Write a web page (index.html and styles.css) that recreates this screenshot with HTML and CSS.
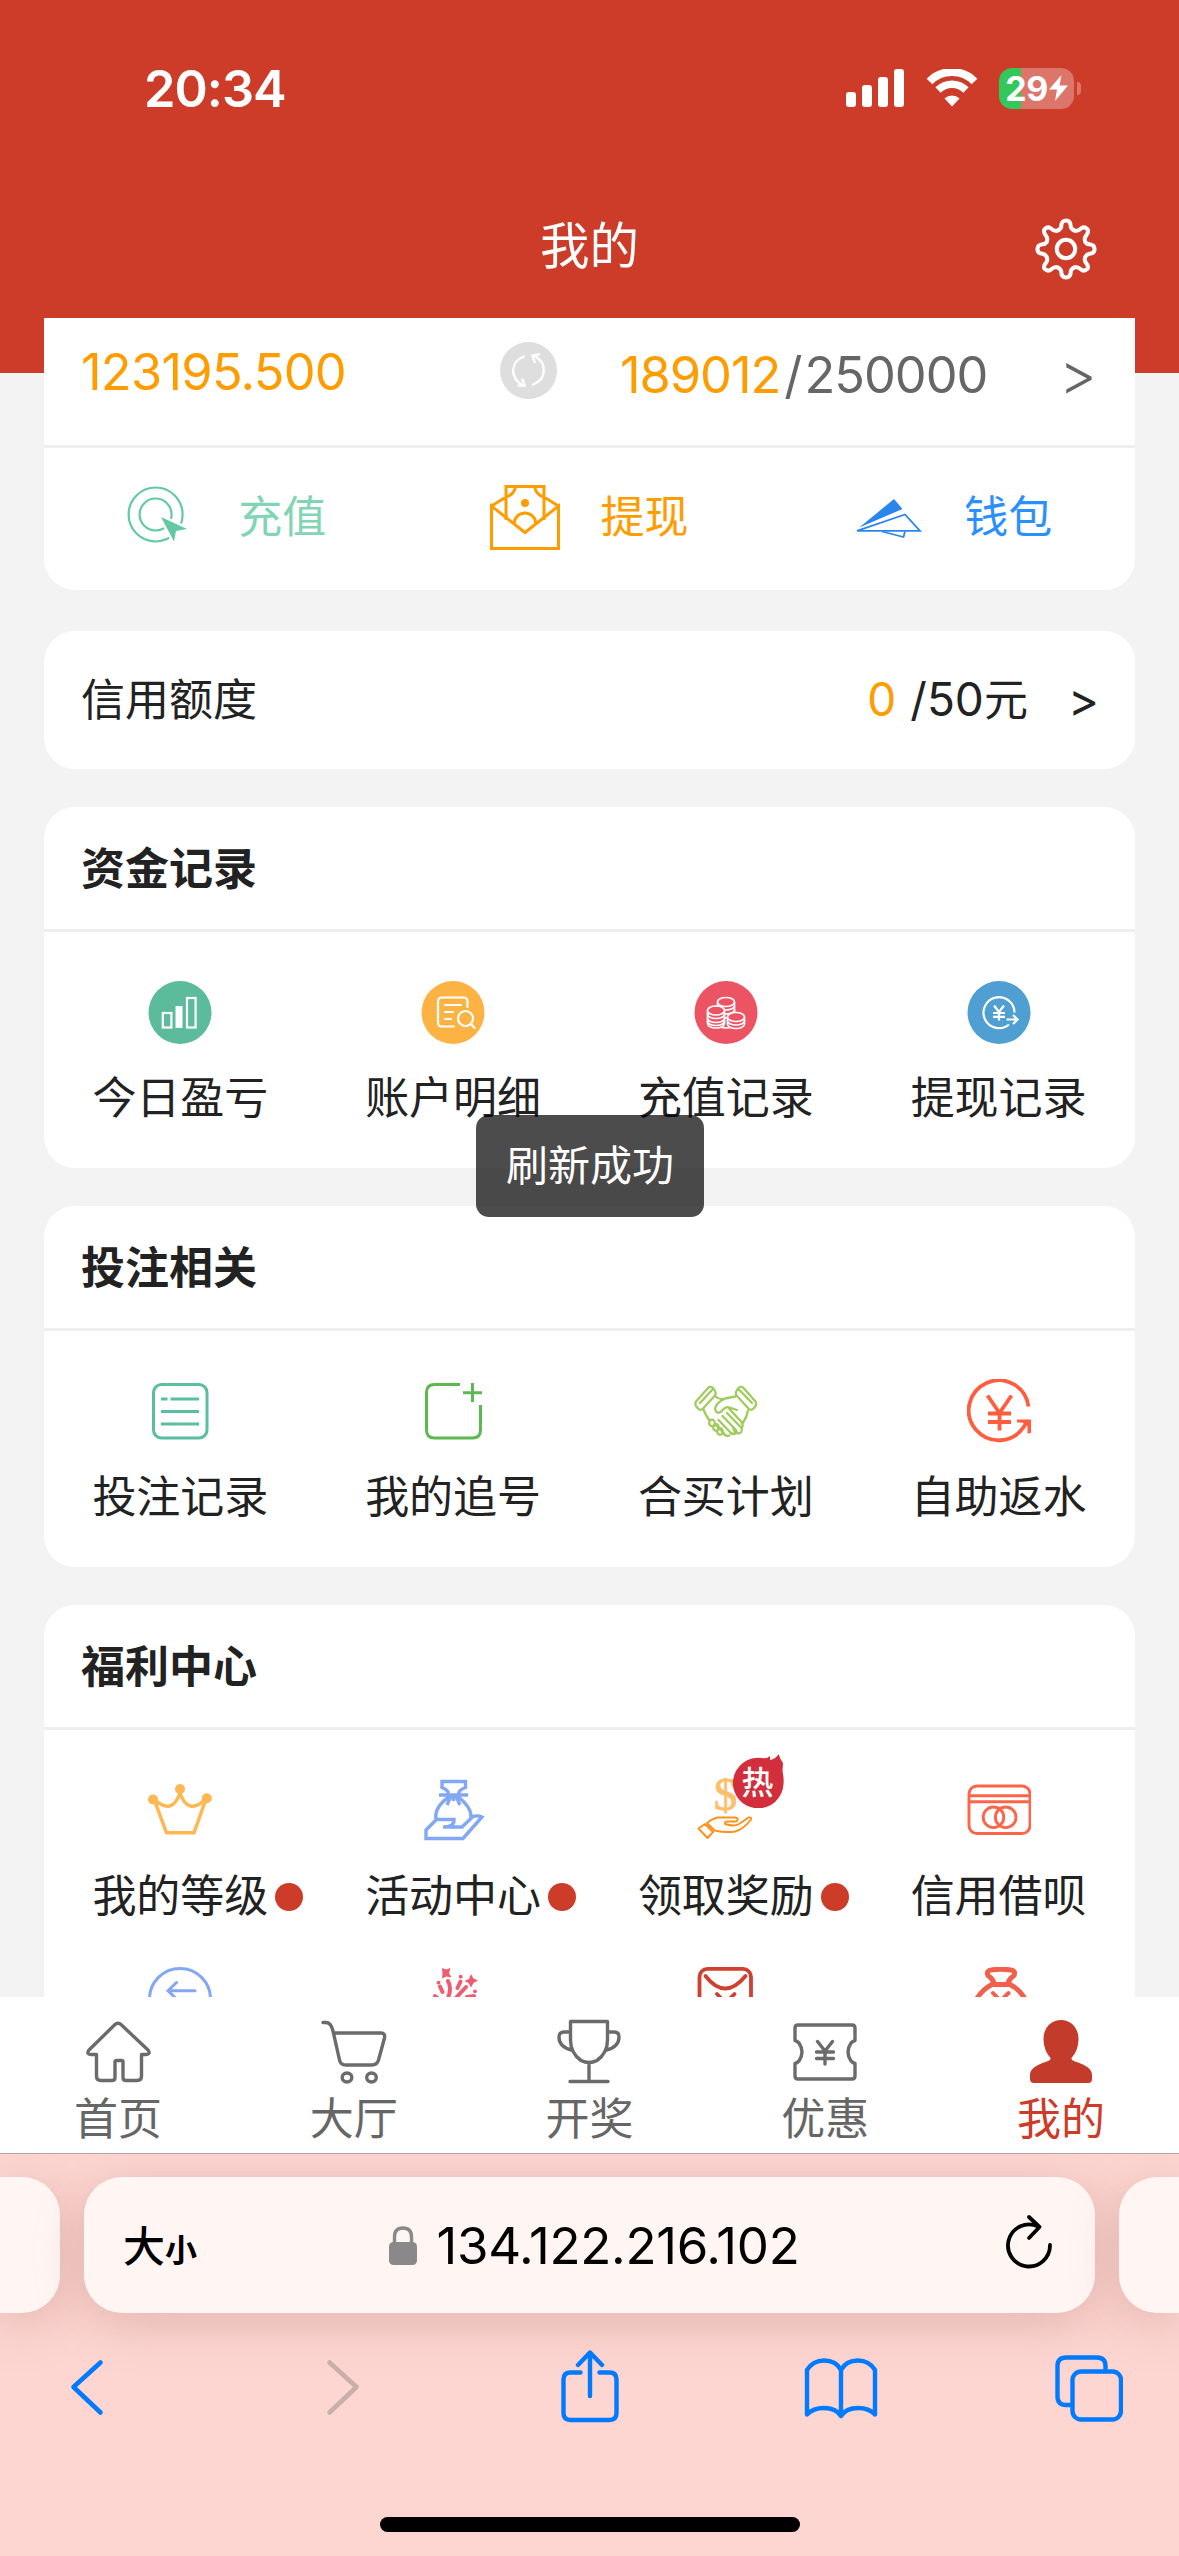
FILE: index.html
```html
<!DOCTYPE html>
<html lang="zh-CN">
<head>
<meta charset="utf-8">
<title>我的</title>
<link rel="stylesheet" href="styles.css">
</head>
<body>
<div class="phone">
  <header class="top">
    <div class="status">
      <span class="time">20:34</span>
      <div class="status-icons">
        <svg class="signal" width="58" height="38" viewBox="0 0 58 38" fill="#fff"><rect x="0" y="23" width="10" height="15" rx="3"/><rect x="16" y="16" width="10" height="22" rx="3"/><rect x="32" y="8" width="10" height="30" rx="3"/><rect x="48" y="0" width="10" height="38" rx="3"/></svg>
        <svg class="wifi" width="52" height="38" viewBox="0 0 52 38" fill="none" stroke="#fff"><path d="M3.500 12.500A31.500 31.500 0 0 1 48.500 12.500" stroke-width="8"/><path d="M12 21A19.800 19.800 0 0 1 40 21" stroke-width="7.500"/><path d="M26 37.500L18.500 29.600A10.800 10.800 0 0 1 33.500 29.600Z" fill="#fff" stroke="none"/></svg>
        <div class="battery"><span class="battery-num">29</span><svg width="19" height="26" viewBox="0 0 19 26"><path d="M12.500 0L0 14.500H8L6 26L19 10.500H10.500Z" fill="#fff"/></svg></div>
        <span class="battery-nub"></span>
      </div>
    </div>
    <div class="nav">
      <h1 class="nav-title">我的</h1>
      <svg class="gear" width="62" height="62" viewBox="0 0 64 64" fill="none" stroke="#fff" stroke-width="4.200" stroke-linejoin="round"><path d="M27 9.500Q27 2.500 32 2.500Q37 2.500 37 9.500Q38 12.500 42 13.500Q45 13.500 48 10.500Q51 8.500 54 11.500Q56 14 52.500 18.500Q50.500 21 52 25Q53.500 27 56 27Q61.500 27.500 61.500 32Q61.500 36.500 56 37Q53.500 37.500 52 40Q50.500 43.500 52.500 46Q56 50 54 52.500Q51 55.500 48 53.500Q45 50.500 42 50.500Q38 51.500 37 54.500Q37 61.500 32 61.500Q27 61.500 27 54.500Q26 51.500 22 50.500Q19 50.500 16 53.500Q13 55.500 10 52.500Q8 50 11.500 46Q13.500 43.500 12 40Q10.500 37.500 8 37Q2.500 36.500 2.500 32Q2.500 27.500 8 27Q10.500 27 12 25Q13.500 21 11.500 18.500Q8 14 10 11.500Q13 8.500 16 10.500Q19 13.500 22 13.500Q26 12.500 27 9.500Z"/><circle cx="32" cy="32" r="9.500"/></svg>
    </div>
  </header>

  <main class="page">
    <section class="card wallet">
      <div class="balances">
        <span class="balance">123195.500</span>
        <svg class="refresh" width="57" height="57" viewBox="0 0 57 57"><circle cx="28.500" cy="28.500" r="28.500" fill="#dedede"/><g fill="none" stroke="#fff" stroke-width="2.400" stroke-linecap="round"><path d="M24 14.500C10 20 9.500 36 23 43.500"/><path d="M18.500 43.500H24.500L22.500 37.500"/><path d="M33 42.500C47 37 47.500 21 34 13.500"/><path d="M39 12.500L32.500 13.500L34.500 20"/></g></svg>
        <span class="quota"><em>189012</em><span class="slash">/</span>250000</span>
        <span class="arrow">&gt;</span>
      </div>
      <div class="actions">
        <a class="action deposit"><svg width="70" height="65" viewBox="0 0 70 65" fill="none" stroke="#62c9a3" stroke-width="2.200"><circle cx="30.600" cy="29.500" r="27"/><circle cx="30.600" cy="29.500" r="16"/><path d="M36 32L62 44L51 46L49 56.500Z" fill="#62c9a3" stroke="#fff" stroke-width="5" paint-order="stroke"/></svg><span>充值</span></a>
        <a class="action withdraw"><svg width="70" height="65" viewBox="0 0 70 65" fill="none" stroke="#ff9c00" stroke-width="3"><path d="M1.500 21V63.500H68.500V21L35 47.500Z"/><path d="M16 35V1.500H54V35M1.500 21L16 12M68.500 21L54 12M25.500 1.500Q24 10 16 12M44.500 1.500Q46 10 54 12M24 39A11 11 0 0 1 46 39"/><circle cx="35" cy="18" r="4" fill="#ff9c00" stroke="none"/></svg><span>提现</span></a>
        <a class="action purse"><svg width="70" height="46" viewBox="0 -4 70 46" fill="none" stroke="#2a86ee" stroke-width="1.800"><path d="M5.300 28.500L40 0L48.500 10Z" fill="#2a86ee" stroke="none"/><path d="M3 31.800L51 15.500L66 31.800Z"/><path d="M28 32.500L49.500 38L51 32.500"/></svg><span>钱包</span></a>
      </div>
    </section>

    <section class="card credit">
      <span>信用额度</span>
      <span class="credit-num"><em>0</em>/50<span class="unit">元</span></span>
      <span class="arrow small">&gt;</span>
    </section>

    <section class="card">
      <h2 class="card-title">资金记录</h2>
      <div class="grid">
        <a class="item"><svg class="icon" viewBox="0 0 64 64"><circle cx="32" cy="32.500" r="31.500" fill="#5bbb9b"/><g fill="none" stroke="#fff" stroke-width="2.200"><rect x="14.800" y="33" width="8.600" height="14.500"/><rect x="27.500" y="26" width="7" height="22" fill="#fff" stroke="none"/><rect x="39" y="18" width="8.600" height="29.500"/></g></svg>今日盈亏</a>
        <a class="item"><svg class="icon" viewBox="0 0 64 64"><circle cx="32" cy="32.500" r="31.500" fill="#fdb343"/><g fill="none" stroke="#fff" stroke-width="2.200" stroke-linecap="round"><path d="M33 46.500H21Q17 46.500 17 42.500V21.500Q17 17.500 21 17.500H42.500Q46.500 17.500 46.500 21.500V27M24 25H40M24 32H32M24 39H30"/><circle cx="44.500" cy="38.500" r="7.500"/><path d="M50 44L53.500 48"/></g></svg>账户明细</a>
        <a class="item"><svg class="icon" viewBox="0 0 64 64"><circle cx="32" cy="32.500" r="31.500" fill="#ec5463"/><g fill="#ec5463" stroke="#fff" stroke-width="1.700"><path d="M23.500 22V44A8.500 4 0 0 0 40.500 44V22"/><ellipse cx="32" cy="22" rx="8.500" ry="4.500"/><path d="M23.500 26A8.500 4 0 0 0 40.500 26M23.500 30A8.500 4 0 0 0 40.500 30M23.500 34A8.500 4 0 0 0 40.500 34" fill="none"/><path d="M13.500 30.500V43.500A8.500 4.500 0 0 0 30.500 43.500V30.500"/><ellipse cx="22" cy="30.500" rx="8.500" ry="4.500"/><path d="M13.500 34A8.500 4.500 0 0 0 30.500 34M13.500 38A8.500 4.500 0 0 0 30.500 38M13.500 41A8.500 4.500 0 0 0 30.500 41" fill="none"/><path d="M33.500 37V44A8.500 4.500 0 0 0 50.500 44V37"/><ellipse cx="42" cy="37" rx="8.500" ry="4.500"/><path d="M33.500 40.500A8.500 4.500 0 0 0 50.500 40.500" fill="none"/></g></svg>充值记录</a>
        <a class="item"><svg class="icon" viewBox="0 0 64 64"><circle cx="32" cy="32.500" r="31.500" fill="#509fd2"/><g fill="none" stroke="#fff" stroke-width="2.200"><path d="M47.500 32.500A15.500 15.500 0 1 0 42 44.500"/><path d="M27 25.500L32 32L37 25.500M32 32V40.500M26 33H38M26 36.800H38M39.500 39.500H50M46 35L50.500 39.500L46 44"/></g></svg>提现记录</a>
      </div>
    </section>

    <section class="card">
      <h2 class="card-title">投注相关</h2>
      <div class="grid">
        <a class="item"><svg class="icon" viewBox="0 0 64 64" fill="none" stroke="#5bbf9f" stroke-width="3"><rect x="5.500" y="5.500" width="53.500" height="53.500" rx="8"/><path d="M13 20H19.500M22.500 20H51M13 32.500H51M13 45H51"/></svg>投注记录</a>
        <a class="item"><svg class="icon" viewBox="0 0 64 64" fill="none" stroke="#5cb851" stroke-width="3"><path d="M39 5.500H13.500Q5.500 5.500 5.500 13.500V51Q5.500 59 13.500 59H51.500Q59.500 59 59.500 51V26M51.500 4V23M42 13.700H61"/></svg>我的追号</a>
        <a class="item"><svg class="icon" viewBox="0 0 64 64" fill="none" stroke="#a0cb5d" stroke-width="2.300" stroke-linecap="round" stroke-linejoin="round"><path d="M14 9Q17 6.500 19.500 9.500L21 12Q22.500 14.500 20.500 17L9 29.500Q6.500 32 4 29.500L2 27Q0.500 24.500 2.500 22ZM18.500 10.500L6 24M49.500 9Q46.500 6.500 44 9.500L42.500 12Q41 14.500 43 17L54.500 29.500Q57 32 59.500 29.500L61.500 27Q63 24.500 61 22ZM45 10.500L58 24"/><path d="M21.500 17.500Q26 21.500 31 19.500Q36 18.500 41.500 17.500M9.500 30.500Q11.500 36 15.500 41.500M54 31.500Q53 38 48.500 44.500M31 19.500Q22 24 21 29.500Q22 36 27.500 32.500Q31.500 27 35.500 28.500L43 31M35 29.500L47.500 43Q49.500 46 48 49M33 34L47.500 49Q49 54 44 54.500M28.500 37L41.500 50.500Q43 54 44 54.500M24.500 41L36 53Q38 56 41.500 54.500L39 48.500M21.500 46L29 53Q31 58 35.500 56.500"/><ellipse cx="18" cy="44" rx="2.800" ry="3.300"/><ellipse cx="22" cy="48.500" rx="2.800" ry="3.300"/><ellipse cx="26" cy="52.500" rx="2.800" ry="3.300"/></svg>合买计划</a>
        <a class="item"><svg class="icon" viewBox="0 0 64 64" fill="none" stroke="#ff5d3e" stroke-width="3.800"><path d="M61.500 27.500A30 30 0 1 0 57 47.500L61 42"/><path d="M50 40.500H64V54L60.500 54.500V47L55 43.500H50Z" fill="#ff5d3e" stroke="none"/><path d="M20.500 16.500L32.500 34L44.500 16.500M32.500 34V51.500M21 34.500H44M21 43H44"/></svg>自助返水</a>
      </div>
    </section>

    <section class="card welfare">
      <h2 class="card-title">福利中心</h2>
      <div class="grid">
        <a class="item"><svg class="icon" viewBox="0 0 64 64" fill="none" stroke="#ffb752" stroke-width="3.500"><path d="M6 21L18.500 54.800H46L58 21Q40 38 32 15Q24 38 6 21Z"/><g fill="#ffb752" stroke="none"><circle cx="5" cy="21.500" r="5"/><circle cx="32" cy="11" r="5"/><circle cx="58.800" cy="20.300" r="5"/></g></svg><span class="label">我的等级<i class="dot"></i></span></a>
        <a class="item"><svg class="icon" viewBox="0 0 64 64" fill="none" stroke="#82a7f5" stroke-width="3.400"><path d="M27.500 17Q28 12 21 9.500V3.500H44.500V9.500Q37 12 37.500 17M18 17H47M29 18Q13 29 15 41M36 18Q51 29 50 40M30 18L26 27M35 18L39 27M32.500 17V23"/><path d="M5 60.500V52L15.500 41.500H33Q33.500 49 22 49H41L52 38.500Q57 37 61 39L42 60.500Z"/></svg><span class="label">活动中心<i class="dot"></i></span></a>
        <a class="item"><svg class="icon" viewBox="0 0 64 64" fill="none" stroke="#ff9119" stroke-width="1.900" stroke-linejoin="round"><text class="dollar" x="31.500" y="32" text-anchor="middle">$</text><path d="M11 46L4.500 50.500L13.500 60L19 54ZM13 45L20.500 52.500Q32 55 41 53.500Q50 51 57 41.500Q58 39 54.500 39.500L45 46Q40 49 31 46Q30 43.500 34 43.500H42Q46 40.500 41 39.500H23Q18 41 13 45Z"/></svg><span class="hot"><svg width="51" height="54" viewBox="0 0 51 54"><path d="M45.500 0Q47.500 6 50 9L49.500 17Q51 24 50.500 30A25.300 25.300 0 1 1 29 4Q34 5 37 2V6Q43 5 45.500 0Z" fill="#d22e3b"/></svg><b>热</b></span><span class="label">领取奖励<i class="dot"></i></span></a>
        <a class="item"><svg class="icon" viewBox="0 0 64 64" fill="none" stroke="#ff6449" stroke-width="2.900"><rect x="2" y="8" width="61" height="47.500" rx="8"/><path d="M2 17.700H63M2 23.800H63"/><circle cx="26.500" cy="39.300" r="10.300"/><circle cx="38.700" cy="39.300" r="10.300"/></svg>信用借呗</a>
        <a class="item"><svg class="icon" viewBox="0 0 64 64" fill="none" stroke="#82a7f5" stroke-width="3"><circle cx="32" cy="32" r="30.500"/><path d="M47 23.700H20.500M28.500 15.500L20 23.700L28.500 32" stroke-linecap="round"/></svg></a>
        <a class="item"><svg class="icon" viewBox="0 0 64 64" fill="#ee5c72" stroke="#ee5c72" stroke-width="4" stroke-linecap="round"><path d="M21 1L25 2.500L29.500 1L28 6L30.500 10.500L25.500 9.500L21 11.500L21.500 6.500ZM50 7L52.500 11.500L57 13.500L52.500 16L50 20.500L47.500 16L43.500 14L48 12Z" stroke="none"/><path d="M27 14Q31 21 27 31M45 20L33 33M39.500 14.500L36.500 21M19 19.500L21.500 25M53 29L46 30M14 29L20 34" fill="none"/><g stroke="none"><circle cx="17.500" cy="15.700" r="1.900"/><circle cx="39.700" cy="9.700" r="1.900"/><circle cx="54" cy="24.300" r="1.900"/></g></svg></a>
        <a class="item"><svg class="icon" viewBox="0 0 64 64" fill="none" stroke="#d04030" stroke-width="3.800" stroke-linecap="round"><rect x="5.500" y="1.900" width="51.500" height="60" rx="8"/><path d="M11.500 9Q31 34 51.500 9M23 27L31.500 36L40.500 27"/></svg></a>
        <a class="item"><svg class="icon" viewBox="0 0 64 64" fill="none" stroke="#f0604c" stroke-width="5" stroke-linecap="round" stroke-linejoin="round"><path d="M27 16Q26 12 21 8.500Q19 3.500 24 3Q34 1.500 44 3Q49 3.500 47 8.500Q42 12 41 16M25 17.500H43Q54 23 59.500 35V60H8V35Q14 23 25 17.500Z"/><path d="M26 26L33.500 34L41.500 26" stroke-width="4"/></svg></a>
      </div>
    </section>
  </main>

  <nav class="tabs">
    <a class="tab"><svg width="66" height="66" viewBox="0 0 66 66"><path d="M29.500 6Q33 2.500 36.500 6L63 31Q66 35.500 61 35.500H56.500V57Q56.500 61.500 52 61.500H41Q38 61.500 38 58.500V43Q38 41.500 36.500 41.500H32Q30 41.500 30 43V58.500Q30 61.500 27 61.500H16Q11.500 61.500 11.500 57V35.500H6Q1 35.500 4 31Z"/></svg>首页</a>
    <a class="tab"><svg width="66" height="66" viewBox="0 0 66 66"><path d="M2 3.500H5Q10 3.500 12 12L18.500 41Q19.500 46 25 46H51Q56 46 57.500 41L63.500 19Q64.500 14 60 14H12.500"/><ellipse cx="26" cy="58.500" rx="4.800" ry="4.500"/><ellipse cx="50.500" cy="58.500" rx="4.800" ry="4.500"/></svg>大厅</a>
    <a class="tab"><svg width="66" height="66" viewBox="0 0 66 66"><path d="M14.500 2.500H51.500V21Q51.500 34 41 41.500Q33 45.500 25 41.500Q14.500 34 14.500 21ZM14.500 13H8Q3 13 3 18Q3 28 15.500 31M51.500 13H58Q63 13 63 18Q63 28 50.500 31M33 44V62.500M14 62.500H52"/></svg>开奖</a>
    <a class="tab"><svg width="66" height="66" viewBox="0 0 66 66"><path d="M6 6H60Q63 6 63 9V21.500Q61 22 59 24Q53 33 59 42Q61 44 63 44.500V57Q63 60 60 60H6Q3 60 3 57V44.500Q5 44 7 42Q13 33 7 24Q5 22 3 21.500V9Q3 6 6 6ZM25.500 22.500L33 32L40.500 22.500M33 32V45M24.500 33H41.500M24.500 39.500H41.500"/></svg>优惠</a>
    <a class="tab active"><svg width="66" height="66" viewBox="0 0 66 66"><path d="M33 1C43 1 51 9 50.500 21Q50 32 43.500 39Q43 41 47 42.500C58 46 64 50 64 56V60Q64 64 60 64H6Q2 64 2 60V56C2 50 8 46 19 42.500Q23 41 22.500 39Q16 32 15.500 21C15 9 23 1 33 1Z"/></svg>我的</a>
  </nav>

  <footer class="browser">
    <div class="urls">
      <div class="pill side left"></div>
      <div class="pill url">
        <span class="size">大<small>小</small></span>
        <span class="address"><svg width="28" height="39" viewBox="0 0 28 39"><rect x="0" y="16" width="28" height="23" rx="4.500" fill="#8b888a"/><path d="M5.500 18V11Q5.500 2 14 2Q22.500 2 22.500 11V18" fill="none" stroke="#8b888a" stroke-width="3.400"/></svg>134.122.216.102</span>
        <svg class="reload" width="48" height="56" viewBox="0 0 48 56" fill="none" stroke="#000" stroke-width="3.800" stroke-linecap="round" stroke-linejoin="round"><path d="M45 31A21 21 0 1 1 33 12.500"/><path d="M24 3L34.500 13L24 24"/></svg>
      </div>
      <div class="pill side right"></div>
    </div>
    <div class="tools">
      <svg width="36" height="74" viewBox="0 0 36 74" stroke="#007aff"><path d="M31.500 12.500L4.500 37L31.500 62.500" stroke-width="4.600"/></svg>
      <svg class="forward" width="36" height="74" viewBox="0 0 36 74" stroke="#c7afab"><path d="M4.500 12.500L31.500 37L4.500 62.500" stroke-width="4.600"/></svg>
      <svg class="share" width="58" height="74" viewBox="0 0 58 74" stroke="#007aff"><path d="M19.500 22.500H9.500Q2.500 22.500 2.500 29.500V63Q2.500 70 9.500 70H48.500Q55.500 70 55.500 63V29.500Q55.500 22.500 48.500 22.500H38.500M29 46V3M17 15L29 2.500L41 15"/></svg>
      <svg class="book" width="74" height="74" viewBox="0 0 74 74" stroke="#007aff"><path d="M37 20Q32 10.500 20 10.500Q9 10.500 3 20V64.500Q9 58 20 58Q32 58 37 66Q42 58 54 58Q65 58 71 64.500V20Q65 10.500 54 10.500Q42 10.500 37 20V66"/></svg>
      <svg width="68" height="74" viewBox="0 0 68 74" stroke="#007aff"><path d="M17 55H11Q2.500 55 2.500 46.500V16Q2.500 7.500 11 7.500H42Q50.500 7.500 50.500 16V21"/><rect x="17.500" y="21.500" width="48.500" height="48" rx="8.500"/></svg>
    </div>
    <div class="home-bar"></div>
  </footer>

  <div class="toast">刷新成功</div>
</div>
</body>
</html>
```
FILE: styles.css
```css
* {
  box-sizing: border-box;
}

body {
  margin: 0;
  font-family: Inter, "Noto Sans CJK SC", sans-serif;
  color: #222;
}

svg {
  display: block;
  flex: none;
}

em,
i {
  font-style: normal;
}

.phone {
  position: relative;
  display: flex;
  flex-direction: column;
  width: 1179px;
  height: 2556px;
  overflow: hidden;
  background: #f3f3f3;
}

/* status bar and title */
.top {
  height: 318px;
  background: #cd3b29;
  color: #fff;
}

.status {
  display: flex;
  justify-content: space-between;
  align-items: center;
  height: 176px;
  padding: 0 98px 0 144px;
}

.time {
  font-size: 50.500px;
  font-weight: 600;
  letter-spacing: -1px;
}

.status-icons {
  display: flex;
  align-items: center;
}

.wifi {
  margin: 0 21px 0 22px;
}

.battery {
  display: flex;
  align-items: center;
  justify-content: center;
  gap: 1px;
  width: 75px;
  height: 41px;
  border-radius: 13px;
  background: linear-gradient(90deg, #34c759 22px, #dd766a 22px);
}

.battery-num {
  font-size: 34px;
  font-weight: 700;
  letter-spacing: -0.5px;
}

.battery-nub {
  width: 4px;
  height: 13px;
  margin-left: 3px;
  border-radius: 0 4px 4px 0;
  background: #dd766a;
}

.nav {
  display: grid;
  grid-template-columns: 1fr auto 1fr;
  align-items: center;
  height: 142px;
  padding-right: 82px;
  padding-left: 82px;
}

.nav-title {
  grid-column: 2;
  margin: 0;
  padding-bottom: 9px;
  font-size: 49.500px;
  font-weight: 400;
}

.gear {
  justify-self: end;
  margin-top: 4px;
}

/* scrolling page */
.page {
  height: 1679px;
  padding: 0 44px;
  overflow: hidden;
  background: linear-gradient(#cd3b29 55px, #f3f3f3 55px);
}

.card {
  height: 361px;
  margin-bottom: 38px;
  border-radius: 31px;
  background: #fff;
}

.wallet {
  height: 272px;
  margin-bottom: 41px;
  border-radius: 0 0 31px 31px;
}

.balances {
  display: flex;
  align-items: center;
  height: 130px;
  padding: 0 38px 22px 37px;
  border-bottom: 3px solid #eee;
  font-size: 50.500px;
  color: #666;
}

.balance {
  width: 419px;
  margin-top: 2px;
  color: #ff9c00;
  letter-spacing: -0.7px;
}

.quota {
  margin: 8px 0 0 63px;
  letter-spacing: -1px;
}

.slash {
  margin: 0 3px 0 4px;
}

.quota em,
.credit em {
  color: #ff9c00;
}

.arrow {
  margin: 6px 0 0 auto;
  font-size: 58px;
  font-weight: 300;
  line-height: 60px;
}

.actions {
  display: grid;
  grid-template-columns: repeat(3, 1fr);
  height: 142px;
}

.action {
  display: flex;
  align-items: center;
  justify-content: center;
  gap: 40px;
  padding-bottom: 3px;
  font-size: 44px;
}

.action span {
  padding-bottom: 7px;
}

.deposit {
  gap: 43px;
  color: #81d5b5;
}

.withdraw {
  color: #ff9c00;
}

.purse {
  color: #2a90ff;
}

.credit {
  display: flex;
  align-items: center;
  height: 138px;
  padding: 0 36px 6px 37px;
  font-size: 44px;
}

.credit-num {
  margin-left: auto;
  font-size: 46px;
}

.unit {
  font-size: 44px;
}

.credit em {
  margin-right: 14px;
}

.arrow.small {
  margin: 5px 0 0 40px;
  font-size: 47px;
  font-weight: 400;
}

.card-title {
  height: 125px;
  margin: 0;
  padding-left: 37px;
  border-bottom: 3px solid #eee;
  font-size: 44px;
  font-weight: 700;
  line-height: 125px;
}

.grid {
  display: grid;
  grid-template-columns: repeat(4, 1fr);
  row-gap: 30px;
  padding-top: 48px;
}

.item {
  position: relative;
  display: flex;
  flex-direction: column;
  align-items: center;
  gap: 22px;
  height: 159px;
  font-size: 44px;
  line-height: 64px;
}

.icon {
  width: 64px;
  height: 64px;
}

.label {
  position: relative;
}

.dot {
  position: absolute;
  top: 19px;
  left: calc(100% + 7px);
  width: 28px;
  height: 28px;
  border-radius: 50%;
  background: #cd3b29;
}

.dollar {
  font: 47px "Liberation Serif", serif;
  fill: #ffbe6b;
  stroke: #ffbe6b;
  stroke-width: 0.8;
}

.hot {
  position: absolute;
  top: -24px;
  left: 143px;
}

.hot b {
  position: absolute;
  top: 13px;
  left: 9px;
  font-size: 32px;
  font-weight: 500;
  line-height: 32px;
  color: #fff;
}

.welfare {
  height: 600px;
}

/* bottom tab bar */
.tabs {
  display: grid;
  grid-template-columns: repeat(5, 1fr);
  height: 156px;
  padding-top: 22px;
  background: #fff;
}

.tab {
  display: flex;
  flex-direction: column;
  align-items: center;
  gap: 3px;
  font-size: 44px;
  line-height: 62px;
  color: #666;
}

.tab svg {
  fill: none;
  stroke: #6b6b6b;
  stroke-width: 3.400;
  stroke-linejoin: round;
  stroke-linecap: round;
}

.tab.active {
  color: #cd3b29;
}

.tab.active svg {
  fill: #c33b2a;
  stroke: none;
}

/* browser chrome */
.browser {
  flex: 1;
  border-top: 1px solid #b9a3a1;
  background: #fdd6d1;
  overflow: hidden;
}

.urls {
  display: flex;
  justify-content: space-between;
  padding-top: 23px;
}

.pill {
  height: 136px;
  border-radius: 38px;
  background: #fff6f4;
  box-shadow: 0 10px 50px rgba(150, 80, 75, 0.26);
}

.side {
  width: 60px;
}

.left {
  border-radius: 0 38px 38px 0;
}

.right {
  border-radius: 38px 0 0 38px;
}

.url {
  display: flex;
  justify-content: space-between;
  align-items: center;
  width: 1011px;
  padding: 0 42px 0 39px;
  color: #000;
}

.size {
  width: 75px;
  padding-bottom: 3px;
  font-size: 42px;
  font-weight: 500;
  white-space: nowrap;
}

.size small {
  font-size: 32px;
  font-weight: 700;
}

.address {
  display: flex;
  align-items: center;
  gap: 20px;
  margin-right: 15px;
  font-size: 51px;
  letter-spacing: -0.3px;
}

.reload {
  margin-bottom: 6px;
}

.tools {
  display: flex;
  justify-content: space-between;
  padding: 37px 56px 0 69px;
}

.tools svg {
  fill: none;
  stroke-width: 4.400;
  stroke-linecap: round;
  stroke-linejoin: round;
}

.tools .forward {
  margin-left: 43px;
}

.tools .share {
  margin-left: 23px;
}

.tools .book {
  margin-left: 8px;
}

.home-bar {
  width: 420px;
  height: 15px;
  margin: 93px auto 0;
  border-radius: 8px;
  background: #000;
}

.toast {
  position: absolute;
  top: 1115px;
  left: 476px;
  width: 228px;
  height: 102px;
  border-radius: 13px;
  background: rgba(0, 0, 0, 0.7);
  font-size: 42px;
  line-height: 102px;
  text-align: center;
  color: #fff;
}
```
